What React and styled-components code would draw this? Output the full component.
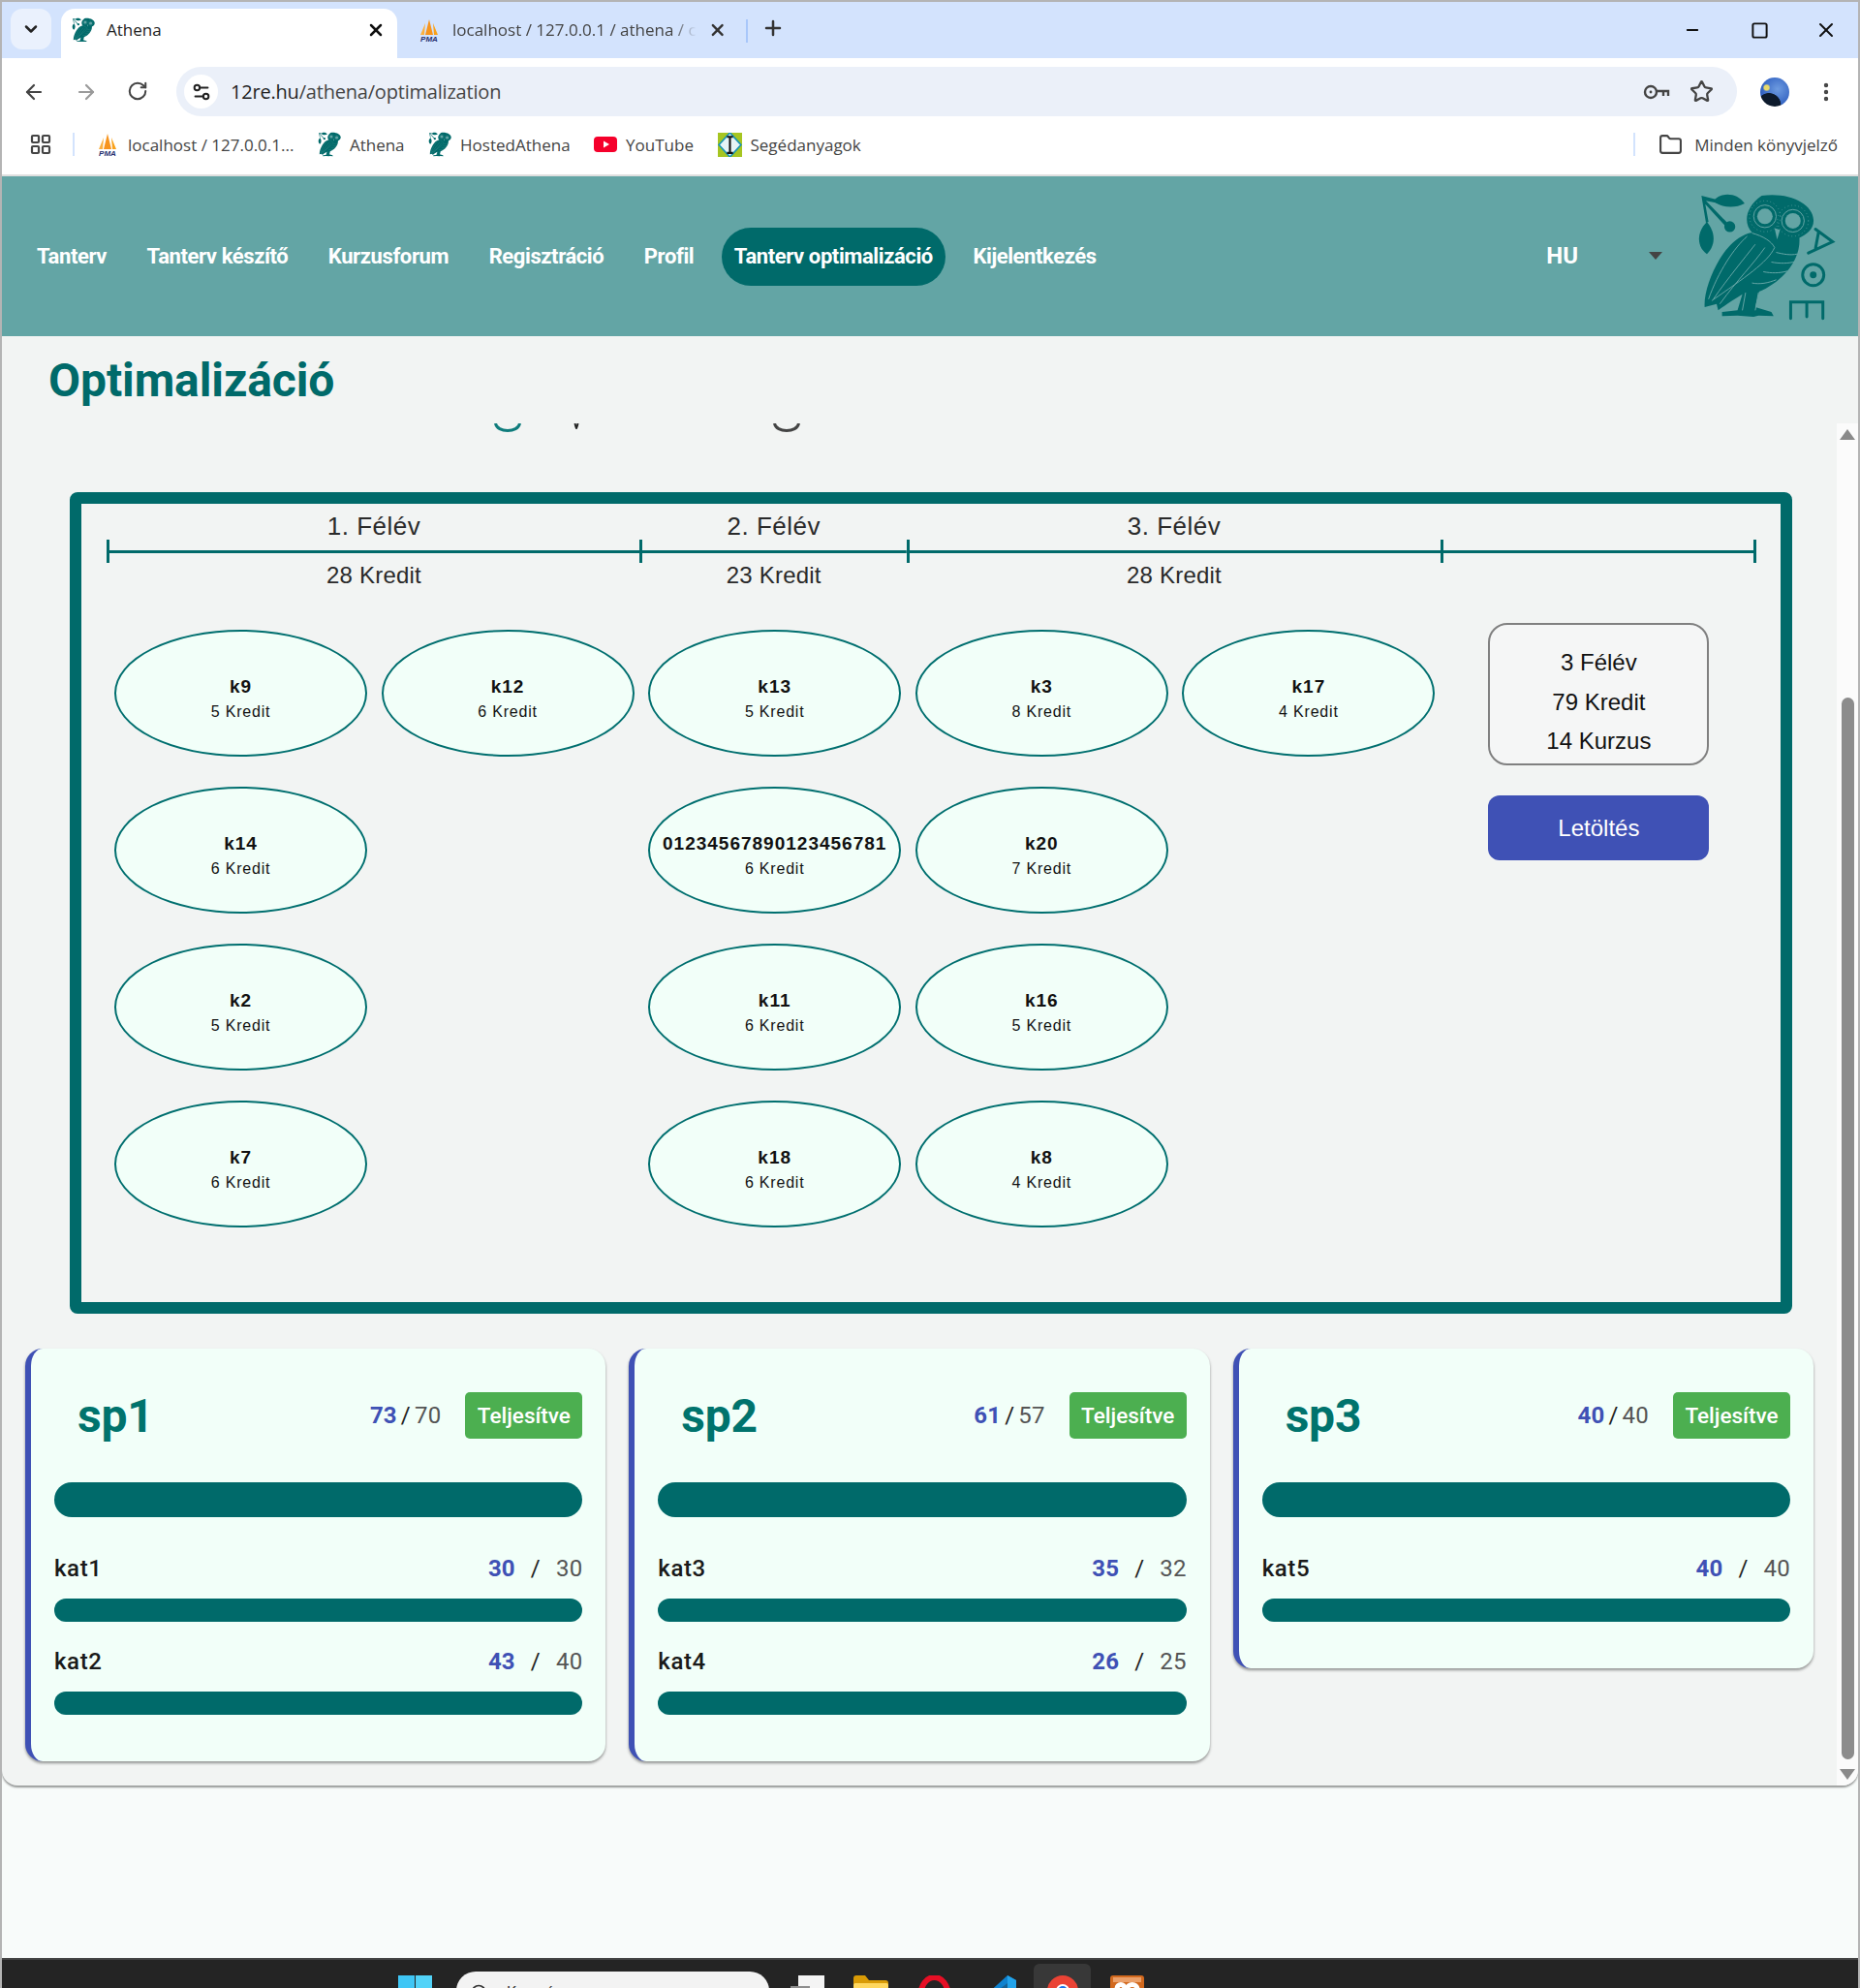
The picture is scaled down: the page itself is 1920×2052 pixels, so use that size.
import React from "react";
import styled, { createGlobalStyle } from "styled-components";
import {
  ArrowLeft,
  ArrowRight,
  ChevronDown,
  Folder,
  LayoutGrid,
  Minus,
  MoreVertical,
  Plus,
  RotateCw,
  Search,
  Settings2,
  Square,
  Star,
  X,
} from "lucide-react";

const TEAL = "#006a6a";
const INDIGO = "#3f51b5";
const MINT = "#f2fff9";
const NAVBG = "#63a5a5";

const GlobalStyle = createGlobalStyle`
  html, body {
    margin: 0;
    padding: 0;
    background: #f8fbfa;
  }
  * {
    box-sizing: border-box;
  }
`;

/* browser window */
const Window = styled.div`
  width: 1920px;
  height: 2052px;
  overflow: hidden;
  display: flex;
  flex-direction: column;
  background: #f8fbfa;
  border-left: 2px solid #b4b4b4;
  border-right: 2px solid #b4b4b4;
  border-top: 2px solid #b4b4b4;
  font-family: "Roboto", sans-serif;
`;

const TabStrip = styled.div`
  height: 58px;
  flex: none;
  background: #d3e3fd;
  display: flex;
  align-items: flex-end;
  padding-left: 9px;
`;

const TabSearch = styled.div`
  width: 42px;
  height: 42px;
  margin-bottom: 9px;
  margin-right: 10px;
  border-radius: 12px;
  background: #eaf1fd;
  color: #222;
  display: flex;
  align-items: center;
  justify-content: center;
`;

const Tab = styled.div`
  width: ${({ $w }) => $w}px;
  height: 51px;
  padding: 0 12px 8px ${({ $pl }) => $pl}px;
  border-radius: 14px 14px 0 0;
  background: ${({ $active }) => ($active ? "#ffffff" : "transparent")};
  display: flex;
  align-items: center;
  gap: 12px;
  color: ${({ $active }) => ($active ? "#222" : "#444")};
  font-family: "Open Sans", sans-serif;
  font-size: 17px;
`;

const TabTitle = styled.span`
  flex: 1;
  white-space: nowrap;
  -webkit-mask-image: ${({ $fade }) => ($fade ? "linear-gradient(90deg, #000 90%, transparent)" : "none")};
  mask-image: ${({ $fade }) => ($fade ? "linear-gradient(90deg, #000 90%, transparent)" : "none")};
`;

const TabDivider = styled.div`
  width: 2px;
  height: 24px;
  margin: 0 14px 16px 8px;
  background: #a8c7fa;
`;

const NewTab = styled.div`
  height: 43px;
  display: flex;
  align-items: flex-start;
  color: #333;
`;

const WindowControls = styled.div`
  margin-left: auto;
  align-self: flex-start;
  height: 58px;
  display: flex;
  align-items: center;
  gap: 45px;
  padding-right: 21px;
  color: #111;
`;

const ControlSlot = styled.div`
  width: 24px;
  display: flex;
  justify-content: center;
`;

const Toolbar = styled.div`
  height: 60px;
  flex: none;
  background: #fff;
  display: flex;
  align-items: center;
  padding: 9px 0 0 21px;
  color: #444;
`;

const NavArrows = styled.div`
  display: flex;
  gap: 30px;
  margin-right: 29px;
`;

const Omnibox = styled.div`
  width: 1611px;
  height: 51px;
  border-radius: 26px;
  background: #ebf0f9;
  display: flex;
  align-items: center;
  padding: 0 24px 0 8px;
`;

const TuneBadge = styled.div`
  width: 35px;
  height: 35px;
  border-radius: 50%;
  background: #fff;
  color: #222;
  display: flex;
  align-items: center;
  justify-content: center;
  margin-right: 13px;
`;

const Url = styled.div`
  flex: 1;
  font-family: "Open Sans", sans-serif;
  font-size: 20px;
  letter-spacing: -0.2px;
  color: #444;
  & b {
    font-weight: 400;
    color: #1f1f1f;
  }
`;

const OmniIcons = styled.div`
  display: flex;
  align-items: center;
  gap: 20px;
`;

const Avatar = styled.div`
  width: 30px;
  height: 30px;
  margin: 0 26px 0 24px;
  border-radius: 50%;
  flex: none;
  background:
    radial-gradient(circle at 22% 35%, #e8d96a 0 8%, transparent 13%),
    radial-gradient(circle at 30% 95%, #0d1a2c 0 34%, transparent 36%),
    radial-gradient(circle at 60% 40%, #6d9be0, #2f5fc0 70%);
`;

const BookmarkBar = styled.div`
  height: 62px;
  flex: none;
  background: #fff;
  display: flex;
  align-items: center;
  padding: 0 0 2px 28px;
  border-bottom: 2px solid #dfdfdf;
  color: #444;
  font-family: "Open Sans", sans-serif;
  font-size: 17px;
`;

const BarDivider = styled.div`
  width: 2px;
  height: 24px;
  background: #d3e3fd;
  margin: ${({ $m }) => $m};
`;

const Bookmark = styled.div`
  display: flex;
  align-items: center;
  gap: 9px;
  margin-right: 24.5px;
  white-space: nowrap;
`;

const AllBookmarks = styled(Bookmark)`
  margin-left: auto;
  margin-right: 21px;
  gap: 12px;
`;

/* the app */
const AppShell = styled.div`
  height: 1661px;
  flex: none;
  display: flex;
  flex-direction: column;
  background: #f2f4f3;
  border-radius: 0 0 16px 16px;
  box-shadow: 0 2px 2px rgba(0, 0, 0, 0.4);
  overflow: hidden;
`;

const NavBar = styled.nav`
  height: 165px;
  flex: none;
  background: ${NAVBG};
  display: flex;
  align-items: center;
  padding-left: 23px;
`;

const NavLink = styled.div`
  height: 60px;
  padding: 0 13px;
  margin-right: 15.5px;
  border-radius: 30px;
  display: flex;
  align-items: center;
  background: ${({ $active }) => ($active ? TEAL : "transparent")};
  color: #fff;
  font-size: 22px;
  font-weight: 700;
  letter-spacing: -0.4px;
  white-space: nowrap;
`;

const LangSelect = styled.div`
  margin-left: auto;
  display: flex;
  align-items: center;
  color: #fff;
  font-size: 24px;
  font-weight: 700;
`;

const Caret = styled.div`
  width: 0;
  height: 0;
  margin-left: 73px;
  margin-right: 36px;
  border-left: 7px solid transparent;
  border-right: 7px solid transparent;
  border-top: 8px solid #444;
`;

const LogoWrap = styled.div`
  width: 143px;
  margin-right: 23px;
  display: flex;
`;

const TitleRow = styled.div`
  height: 87px;
  flex: none;
  padding: 20px 0 0 48px;
`;

const Title = styled.h1`
  margin: 0;
  color: ${TEAL};
  font-size: 48px;
  line-height: 52px;
  font-weight: 700;
  letter-spacing: -0.1px;
`;

const ScrollRow = styled.div`
  flex: 1;
  min-height: 0;
  display: flex;
`;

const ScrollContent = styled.div`
  flex: 1;
  min-width: 0;
`;

const ClippedRadios = styled.div`
  height: 74px;
  display: flex;
  align-items: flex-start;
  padding: 3px 0 0 508px;
`;

const Board = styled.section`
  width: 1778px;
  height: 848px;
  margin-left: 70px;
  border: 12px solid ${TEAL};
  border-radius: 8px;
  padding: 0 0 0 26px;
  font-family: "Liberation Sans", Arial, sans-serif;
`;

const Timeline = styled.div`
  display: flex;
  color: #2a2a2a;
`;

const Semester = styled.div`
  width: ${({ $w }) => $w}px;
  text-align: center;
`;

const SemesterLabel = styled.div`
  height: 37px;
  padding: 9px 0 0 2px;
  font-size: 26px;
  line-height: 29px;
  letter-spacing: 0.5px;
`;

const Rule = styled.div`
  height: 24px;
  border-left: 3px solid ${TEAL};
  border-right: ${({ $end }) => ($end ? `3px solid ${TEAL}` : "none")};
  background: linear-gradient(${TEAL}, ${TEAL}) center / 100% 3px no-repeat;
`;

const SemesterCredit = styled.div`
  height: 24px;
  padding: 1px 0 0 2px;
  font-size: 24px;
  line-height: 24px;
  letter-spacing: 0.2px;
`;

const BoardBody = styled.div`
  display: flex;
  align-items: flex-start;
  margin-top: 45px;
  padding-left: 8px;
`;

const CourseGrid = styled.div`
  display: grid;
  grid-template-columns: repeat(5, 261px);
  grid-auto-rows: 131px;
  column-gap: 14.6px;
  row-gap: 31px;
`;

const Course = styled.div`
  grid-column: ${({ $col }) => $col};
  border: 2px solid #006f6f;
  border-radius: 50%;
  background: ${MINT};
  padding-top: 12px;
  display: flex;
  flex-direction: column;
  align-items: center;
  justify-content: center;
  color: #111;
  text-align: center;
  white-space: nowrap;
`;

const CourseName = styled.div`
  font-size: 19px;
  line-height: 26px;
  font-weight: 700;
  letter-spacing: 1px;
`;

const CourseCredit = styled.div`
  font-size: 16px;
  line-height: 26px;
  letter-spacing: 0.8px;
`;

const Side = styled.div`
  width: 228px;
  margin: -7px 0 0 55px;
`;

const Summary = styled.div`
  height: 147px;
  padding-top: 19px;
  border: 2px solid #808080;
  border-radius: 20px;
  background: #f5f6f6;
  color: #111;
  font-size: 24px;
  line-height: 40.6px;
  text-align: center;
`;

const DownloadButton = styled.div`
  height: 67px;
  margin-top: 31px;
  border-radius: 12px;
  background: ${INDIGO};
  color: #fff;
  font-size: 24px;
  display: flex;
  align-items: center;
  justify-content: center;
`;

const CardGrid = styled.div`
  width: 1846px;
  margin: 36px 0 0 24px;
  display: grid;
  grid-template-columns: repeat(3, 1fr);
  column-gap: 24px;
  align-items: start;
`;

const Card = styled.article`
  padding: 45px 24px 48px 24px;
  border-left: 6px solid ${INDIGO};
  border-radius: 18px;
  background: ${MINT};
  box-shadow: 0 2px 3px rgba(0, 0, 0, 0.4);
`;

const CardHeader = styled.div`
  height: 48px;
  display: flex;
  align-items: center;
`;

const CardTitle = styled.div`
  flex: 1;
  padding-left: 24px;
  color: #00736d;
  font-size: 48px;
  font-weight: 700;
  letter-spacing: -0.2px;
`;

const Score = styled.div`
  display: flex;
  align-items: center;
  gap: ${({ $gap }) => $gap}px;
  font-size: 24px;
  font-weight: 400;
  color: #555;
  letter-spacing: 0.2px;
`;

const Earned = styled.span`
  color: ${INDIGO};
  font-weight: 700;
`;

const Slash = styled.span`
  color: #222;
`;

const DoneBadge = styled.div`
  width: 121px;
  height: 48px;
  margin-left: 25px;
  border-radius: 5px;
  background: #4caf50;
  color: #fff;
  font-size: 22.5px;
  font-weight: 500;
  display: flex;
  align-items: center;
  justify-content: center;
`;

const Progress = styled.div`
  height: ${({ $h }) => $h}px;
  margin-top: ${({ $mt }) => $mt}px;
  border-radius: ${({ $h }) => $h / 2}px;
  background: ${TEAL};
`;

const CategoryRow = styled.div`
  display: flex;
  justify-content: space-between;
  align-items: center;
  height: 34px;
  margin-top: ${({ $mt }) => $mt}px;
  color: #1a1a1a;
  font-size: 24px;
  font-weight: 500;
  letter-spacing: 0.6px;
`;

const Scrollbar = styled.div`
  width: 22px;
  flex: none;
  margin-top: 3px;
  background: #fbfbfb;
  display: flex;
  flex-direction: column;
  align-items: center;
  padding-top: 6px;
`;

const ScrollUp = styled.div`
  width: 0;
  height: 0;
  border-left: 8px solid transparent;
  border-right: 8px solid transparent;
  border-bottom: 11px solid #8a8a8a;
`;

const ScrollDown = styled.div`
  width: 0;
  height: 0;
  margin-top: 10px;
  border-left: 8px solid transparent;
  border-right: 8px solid transparent;
  border-top: 11px solid #8a8a8a;
`;

const ScrollThumb = styled.div`
  width: 13px;
  height: 1096px;
  margin-top: 266px;
  border-radius: 7px;
  background: #8c8c8c;
`;

const Blank = styled.div`
  flex: 1;
`;

const Taskbar = styled.footer`
  height: 31px;
  flex: none;
  background: #242424;
  border-top: 2px solid #444;
  margin: 0 -2px;
  overflow: hidden;
  display: flex;
  align-items: flex-start;
  padding-left: 411px;
`;

const TaskSearch = styled.div`
  width: 323px;
  height: 40px;
  margin: 12px 22px 0 24px;
  flex: none;
  border-radius: 20px;
  background: #f3f3f3;
  display: flex;
  padding: 12px 0 0 14px;
  gap: 18px;
  color: #333;
  font-size: 16px;
  line-height: 20px;
`;

const TaskIcon = styled.div`
  width: ${({ $w }) => $w || 35}px;
  margin-top: 16px;
  margin-right: ${({ $mr }) => $mr || 30}px;
  flex: none;
  display: flex;
`;

const ChromeTile = styled.div`
  width: 59px;
  height: 40px;
  margin-top: 4px;
  margin-right: 20px;
  border-radius: 6px 6px 0 0;
  background: #383838;
  flex: none;
  display: flex;
  justify-content: center;
  padding-top: 12px;
`;

/* drawings */
const Owl = ({ size, letters }) => (
  <svg
    width={size}
    viewBox={letters ? "755 52 430 400" : "750 50 370 400"}
    fill="none"
    style={{ display: "block", flex: "none" }}
  >
    <g fill={TEAL}>
      <path d="M768 64 L815 76 L812 86 L782 80 L850 150 L842 158 L780 90 L790 145 L782 148 Z" />
      <circle cx="856" cy="160" r="17" />
      <path d="M805 80 C830 50 880 55 902 88 C870 106 825 100 805 80 Z" />
      <path d="M785 145 C750 180 755 225 785 245 C815 215 810 175 785 145 Z" />
      <path d="M955 64 C1040 52 1114 88 1116 140 C1117 170 1092 185 1072 195 C1077 270 1012 335 947 362 L935 410 L985 425 L992 438 L945 436 L930 440 L880 436 L832 438 L832 425 L880 420 L895 370 C870 385 840 405 820 420 L815 400 L778 410 C775 370 795 310 825 260 C850 220 885 185 925 178 C898 150 903 100 955 64 Z" />
    </g>
    <g stroke={NAVBG} strokeWidth="3" fill="none">
      <circle cx="965" cy="128" r="48" strokeDasharray="2 9" />
      <circle cx="1052" cy="142" r="48" strokeDasharray="2 9" />
      <circle cx="965" cy="128" r="35" />
      <circle cx="1052" cy="142" r="35" />
      <path d="M925 180 C960 190 985 205 995 225 C975 270 900 320 800 390" />
      <path d="M910 190 C870 225 820 300 790 385" />
      <path d="M935 215 C900 260 850 320 805 385" />
      <path d="M965 225 C930 275 880 325 825 400" />
      <path d="M1000 240 C1020 245 1045 250 1065 245" />
      <path d="M985 270 C1010 275 1040 275 1060 268" />
      <path d="M960 300 C985 305 1010 305 1035 298" />
      <path d="M925 335 C950 340 975 335 1000 325" />
      <path d="M905 365 L895 420 M945 365 L935 420" />
    </g>
    <g fill={NAVBG}>
      <circle cx="965" cy="128" r="24" />
      <circle cx="1052" cy="142" r="24" />
      <path d="M995 165 L1012 170 L1003 200 Z" />
    </g>
    {letters && (
      <g stroke={TEAL} strokeWidth="9" fill="none" strokeLinecap="round">
        <path d="M1122 168 L1175 207 L1100 242 M1132 175 L1122 228" />
        <circle cx="1115" cy="310" r="33" />
        <path d="M1045 445 V394 H1145 V445 M1095 394 V440" />
        <circle cx="1115" cy="310" r="6" fill={TEAL} />
      </g>
    )}
  </svg>
);

const PmaIcon = ({ size = 24 }) => (
  <svg width={size} height={size} viewBox="0 0 24 24" style={{ flex: "none" }}>
    <path d="M12 1 L16 17 H8 Z" fill="#f7941d" />
    <path d="M8 5 L7 17 H3 Z" fill="#fbb040" />
    <path d="M16 5 L21 17 H17 Z" fill="#f9a11b" />
    <text x="12" y="24" textAnchor="middle" fontSize="8" fontWeight="700" fontStyle="italic" fill="#27306f" fontFamily="Liberation Sans">
      PMA
    </text>
  </svg>
);

const YoutubeIcon = () => (
  <svg width="24" height="24" viewBox="0 0 24 24" style={{ flex: "none" }}>
    <rect y="4" width="24" height="16" rx="4" fill="#f5002b" />
    <path d="M10 8.5 L16 12 L10 15.5 Z" fill="#fff" />
  </svg>
);

const MaterialIcon = () => (
  <svg width="25" height="25" viewBox="0 0 24 24" style={{ flex: "none" }}>
    <rect width="24" height="24" fill="#a6c521" />
    <path d="M12 0 L23 12 L12 24 L1 12 Z" fill="#e6f3f6" stroke="#1693b5" strokeWidth="1.6" />
    <path d="M9 4 H15 M12 4 V20 M9 20 H15" stroke="#111" strokeWidth="2" />
  </svg>
);

const KeyIcon = () => (
  <svg width="28" height="18" viewBox="0 0 28 18" fill="none" stroke="#444" strokeWidth="2.4">
    <circle cx="8" cy="9" r="6" />
    <circle cx="8" cy="9" r="1.4" fill="#444" stroke="none" />
    <path d="M14 8 H26 V13 M21 8 V13" />
  </svg>
);

const WinLogo = () => (
  <svg width="35" height="35" viewBox="0 0 35 35">
    <rect width="17" height="17" fill="#3fc6f5" />
    <rect x="18" width="17" height="17" fill="#52d3f8" />
    <rect y="18" width="17" height="17" fill="#2bb5ef" />
    <rect x="18" y="18" width="17" height="17" fill="#3cc4f5" />
  </svg>
);

const DocIcon = () => (
  <svg width="35" height="30" viewBox="0 0 35 30">
    <rect x="8" width="27" height="30" fill="#f4f4f4" />
    <rect y="11" width="20" height="19" fill="#8d8d8d" />
  </svg>
);

const FolderIcon = () => (
  <svg width="36" height="30" viewBox="0 0 36 30">
    <path d="M0 3 a3 3 0 0 1 3-3 h9 l4 5 h17 a3 3 0 0 1 3 3 v22 H0 Z" fill="#d99b06" />
    <rect y="8" width="36" height="22" rx="2" fill="#ffd75e" />
  </svg>
);

const OperaIcon = () => (
  <svg width="33" height="32" viewBox="0 0 33 32">
    <ellipse cx="16.5" cy="20" rx="14" ry="18" fill="none" stroke="#e60f25" strokeWidth="6" />
  </svg>
);

const VscodeIcon = () => (
  <svg width="36" height="32" viewBox="0 0 36 32">
    <path d="M27 0 L5 20 L0 16 V32 H36 V5 Z" fill="#0f82cf" />
    <path d="M27 0 L36 5 V32 H27 Z" fill="#23a3ea" />
    <path d="M8 22 L27 8 V32 H18 Z" fill="#242424" opacity="0.35" />
  </svg>
);

const ChromeIcon = () => (
  <svg width="32" height="32" viewBox="0 0 32 32">
    <circle cx="16" cy="16" r="16" fill="#ea4335" />
    <path d="M2 24 A16 16 0 0 0 16 32 L16 20 Z" fill="#34a853" />
    <path d="M30 24 A16 16 0 0 1 16 32 L16 20 Z" fill="#fbbc04" />
    <circle cx="16" cy="16" r="7" fill="#fff" />
    <circle cx="16" cy="16" r="5" fill="#1a73e8" />
  </svg>
);

const OrangeAppIcon = () => (
  <svg width="35" height="32" viewBox="0 0 35 32">
    <rect width="35" height="32" rx="3" fill="#d2691e" />
    <rect x="3" y="2" width="29" height="5" fill="#eba06a" />
    <path d="M7 32 V14 C7 8 15 8 15 14 V22 M17.5 20 V14 C17.5 8 28 8 28 14 V32" fill="none" stroke="#fff" strokeWidth="5" />
  </svg>
);

const RadioArc = ({ gap, color, w = 28, weight = 3, h = 9 }) => (
  <svg width={w} height={h} viewBox={`0 0 ${w} ${h}`} style={{ marginRight: gap, flex: "none" }} fill="none">
    <path d={`M1.5 0 C3 ${h + 1} ${w - 3} ${h + 1} ${w - 1.5} 0`} stroke={color} strokeWidth={weight} />
  </svg>
);

const navItems = [
  "Tanterv",
  "Tanterv készítő",
  "Kurzusforum",
  "Regisztráció",
  "Profil",
  "Tanterv optimalizáció",
  "Kijelentkezés",
];

const semesters = [
  { w: 550, label: "1. Félév", credit: "28 Kredit" },
  { w: 275.5, label: "2. Félév", credit: "23 Kredit" },
  { w: 551, label: "3. Félév", credit: "28 Kredit" },
  { w: 326.5, label: "", credit: "", end: true },
];

const courses = [
  { name: "k9", credit: 5, col: 1 },
  { name: "k12", credit: 6, col: 2 },
  { name: "k13", credit: 5, col: 3 },
  { name: "k3", credit: 8, col: 4 },
  { name: "k17", credit: 4, col: 5 },
  { name: "k14", credit: 6, col: 1 },
  { name: "01234567890123456781", credit: 6, col: 3 },
  { name: "k20", credit: 7, col: 4 },
  { name: "k2", credit: 5, col: 1 },
  { name: "k11", credit: 6, col: 3 },
  { name: "k16", credit: 5, col: 4 },
  { name: "k7", credit: 6, col: 1 },
  { name: "k18", credit: 6, col: 3 },
  { name: "k8", credit: 4, col: 4 },
];

const cards = [
  {
    name: "sp1",
    earned: 73,
    need: 70,
    cats: [
      { name: "kat1", earned: 30, need: 30 },
      { name: "kat2", earned: 43, need: 40 },
    ],
  },
  {
    name: "sp2",
    earned: 61,
    need: 57,
    cats: [
      { name: "kat3", earned: 35, need: 32 },
      { name: "kat4", earned: 26, need: 25 },
    ],
  },
  {
    name: "sp3",
    earned: 40,
    need: 40,
    cats: [{ name: "kat5", earned: 40, need: 40 }],
  },
];

const App = () => {
  return (
    <Window>
      <GlobalStyle />
      <TabStrip>
        <TabSearch>
          <ChevronDown size={20} strokeWidth={3} />
        </TabSearch>
        <Tab $active $w={347} $pl={11}>
          <Owl size={24} />
          <TabTitle>Athena</TabTitle>
          <X size={20} strokeWidth={3} color="#111" />
        </Tab>
        <Tab $w={352} $pl={21}>
          <PmaIcon />
          <TabTitle $fade>localhost / 127.0.0.1 / athena / c</TabTitle>
          <X size={20} strokeWidth={3} color="#333" />
        </Tab>
        <TabDivider />
        <NewTab>
          <Plus size={24} strokeWidth={2.5} />
        </NewTab>
        <WindowControls>
          <ControlSlot>
            <Minus size={18} strokeWidth={2.4} />
          </ControlSlot>
          <ControlSlot>
            <Square size={19} strokeWidth={2.5} />
          </ControlSlot>
          <ControlSlot>
            <X size={24} strokeWidth={2} />
          </ControlSlot>
        </WindowControls>
      </TabStrip>

      <Toolbar>
        <NavArrows>
          <ArrowLeft size={24} strokeWidth={2.2} />
          <ArrowRight size={24} strokeWidth={2.2} color="#9a9a9a" />
          <RotateCw size={22} strokeWidth={2.2} />
        </NavArrows>
        <Omnibox>
          <TuneBadge>
            <Settings2 size={22} strokeWidth={2.2} />
          </TuneBadge>
          <Url>
            <b>12re.hu</b>/athena/optimalization
          </Url>
          <OmniIcons>
            <KeyIcon />
            <Star size={25} strokeWidth={2.2} />
          </OmniIcons>
        </Omnibox>
        <Avatar />
        <MoreVertical size={24} strokeWidth={2.4} />
      </Toolbar>

      <BookmarkBar>
        <LayoutGrid size={24} strokeWidth={2.2} />
        <BarDivider $m="0 22px 0 21px" />
        <Bookmark>
          <PmaIcon />
          localhost / 127.0.0.1...
        </Bookmark>
        <Bookmark>
          <Owl size={24} />
          Athena
        </Bookmark>
        <Bookmark>
          <Owl size={24} />
          HostedAthena
        </Bookmark>
        <Bookmark>
          <YoutubeIcon />
          YouTube
        </Bookmark>
        <Bookmark>
          <MaterialIcon />
          Segédanyagok
        </Bookmark>
        <AllBookmarks>
          <BarDivider $m="0 12px 0 0" />
          <Folder size={25} strokeWidth={2} />
          Minden könyvjelző
        </AllBookmarks>
      </BookmarkBar>

      <AppShell>
        <NavBar>
          {navItems.map((item) => (
            <NavLink key={item} $active={item === "Tanterv optimalizáció"}>
              {item}
            </NavLink>
          ))}
          <LangSelect>
            HU
            <Caret />
            <LogoWrap>
              <Owl size={143} letters />
            </LogoWrap>
          </LangSelect>
        </NavBar>

        <TitleRow>
          <Title>Optimalizáció</Title>
        </TitleRow>

        <ScrollRow>
          <ScrollContent>
            <ClippedRadios>
              <RadioArc gap={54} color="#0f7c7c" />
              <RadioArc gap={200} color="#222" w={6} weight={2} h={6} />
              <RadioArc gap={0} color="#444" />
            </ClippedRadios>
            <Board>
              <Timeline>
                {semesters.map((s, i) => (
                  <Semester key={i} $w={s.w}>
                    <SemesterLabel>{s.label}</SemesterLabel>
                    <Rule $end={s.end} />
                    <SemesterCredit>{s.credit}</SemesterCredit>
                  </Semester>
                ))}
              </Timeline>
              <BoardBody>
                <CourseGrid>
                  {courses.map((c) => (
                    <Course key={c.name} $col={c.col}>
                      <CourseName>{c.name}</CourseName>
                      <CourseCredit>{c.credit} Kredit</CourseCredit>
                    </Course>
                  ))}
                </CourseGrid>
                <Side>
                  <Summary>
                    <div>3 Félév</div>
                    <div>79 Kredit</div>
                    <div>14 Kurzus</div>
                  </Summary>
                  <DownloadButton>Letöltés</DownloadButton>
                </Side>
              </BoardBody>
            </Board>

            <CardGrid>
              {cards.map((card) => (
                <Card key={card.name}>
                  <CardHeader>
                    <CardTitle>{card.name}</CardTitle>
                    <Score $gap={4}>
                      <Earned>{card.earned}</Earned>
                      <Slash>/</Slash>
                      <span>{card.need}</span>
                    </Score>
                    <DoneBadge>Teljesítve</DoneBadge>
                  </CardHeader>
                  <Progress $h={36} $mt={45} />
                  {card.cats.map((cat, i) => (
                    <React.Fragment key={cat.name}>
                      <CategoryRow $mt={i === 0 ? 36 : 24}>
                        <span>{cat.name}</span>
                        <Score $gap={16}>
                          <Earned>{cat.earned}</Earned>
                          <Slash>/</Slash>
                          <span>{cat.need}</span>
                        </Score>
                      </CategoryRow>
                      <Progress $h={24} $mt={14} />
                    </React.Fragment>
                  ))}
                </Card>
              ))}
            </CardGrid>
          </ScrollContent>
          <Scrollbar>
            <ScrollUp />
            <ScrollThumb />
            <ScrollDown />
          </Scrollbar>
        </ScrollRow>
      </AppShell>

      <Blank />

      <Taskbar>
        <TaskIcon $mr={1}>
          <WinLogo />
        </TaskIcon>
        <TaskSearch>
          <Search size={20} strokeWidth={2} />
          Keresés
        </TaskSearch>
        <TaskIcon>
          <DocIcon />
        </TaskIcon>
        <TaskIcon $w={36} $mr={31}>
          <FolderIcon />
        </TaskIcon>
        <TaskIcon $w={33} $mr={32}>
          <OperaIcon />
        </TaskIcon>
        <TaskIcon $w={36} $mr={18}>
          <VscodeIcon />
        </TaskIcon>
        <ChromeTile>
          <ChromeIcon />
        </ChromeTile>
        <TaskIcon>
          <OrangeAppIcon />
        </TaskIcon>
      </Taskbar>
    </Window>
  );
};

export default App;
